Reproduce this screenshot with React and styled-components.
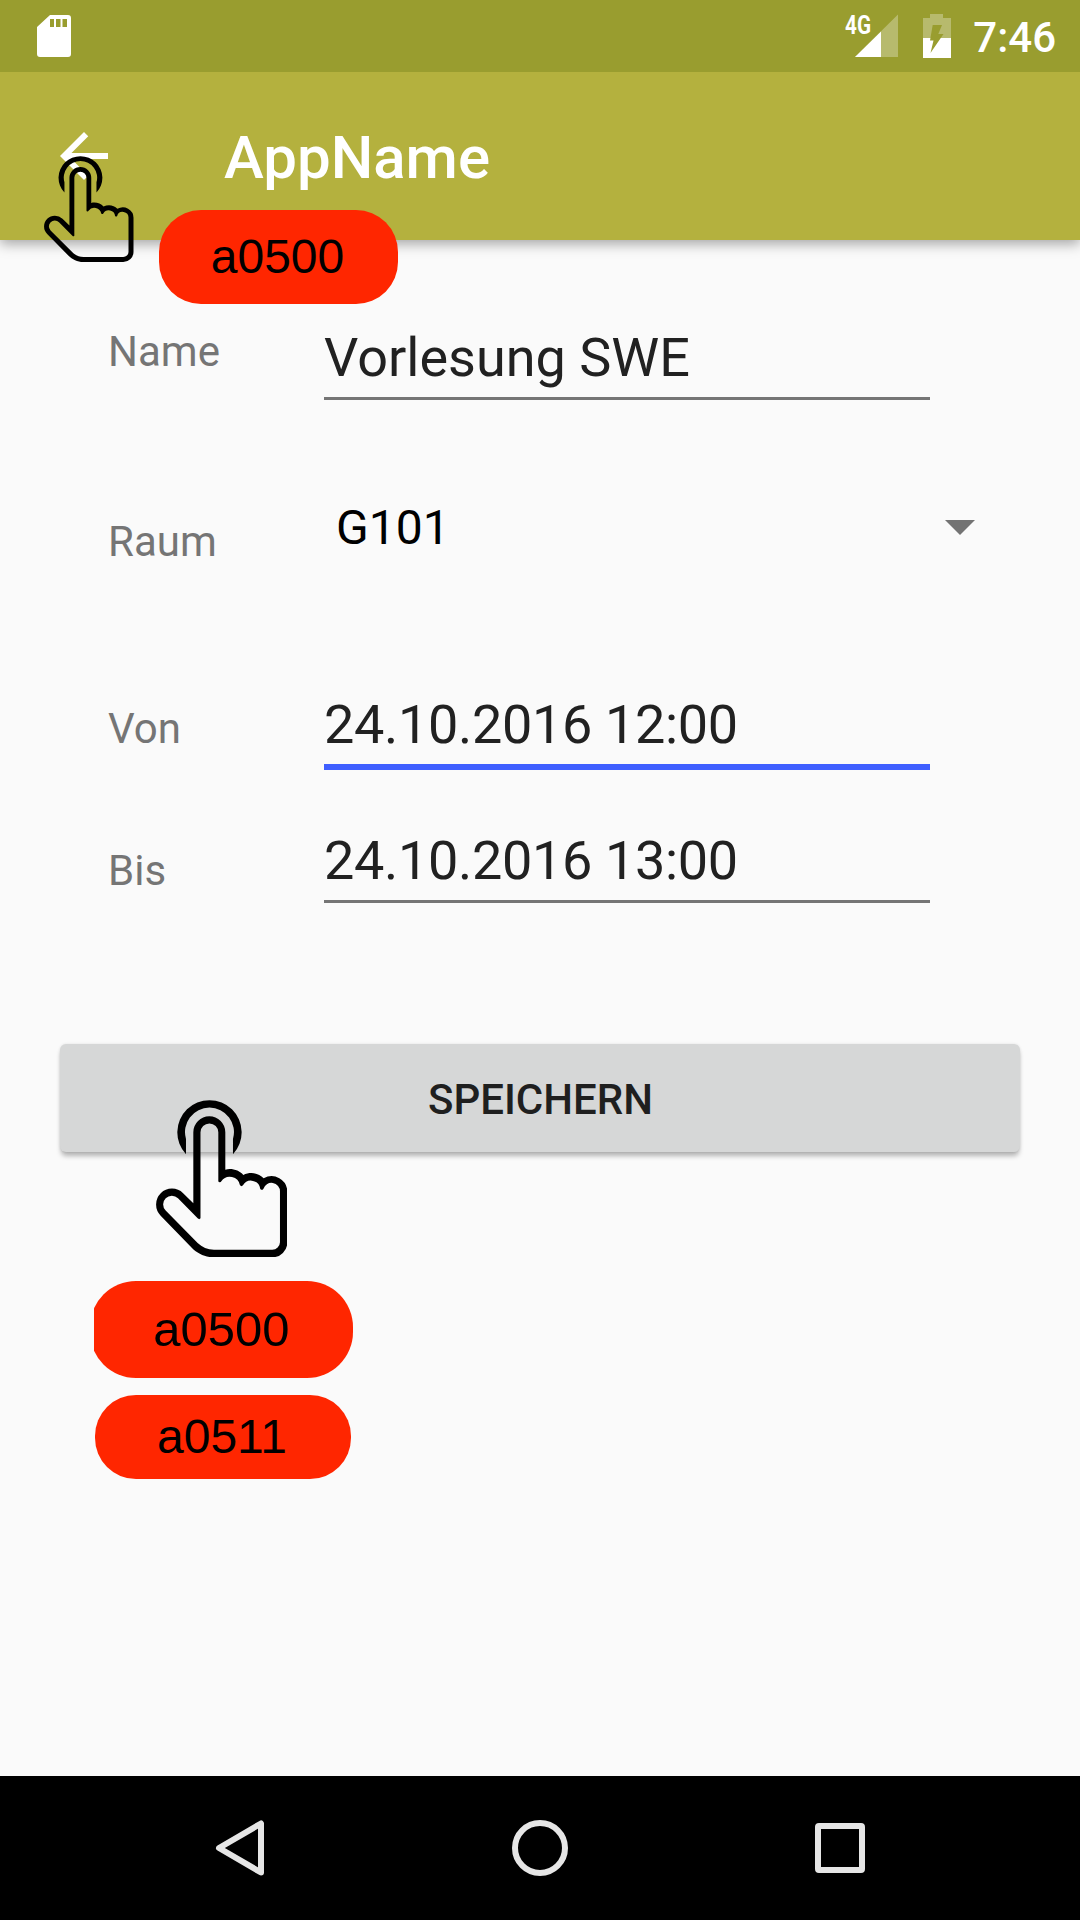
import React from "react";
import styled, { createGlobalStyle } from "styled-components";

const GlobalStyle = createGlobalStyle`
  * { box-sizing: border-box; }
  body { margin: 0; background: #fafafa; font-family: Roboto, "Liberation Sans", sans-serif; }
`;

const Screen = styled.div`
  position: relative;
  display: flex;
  flex-direction: column;
  width: 1080px;
  height: 1920px;
  overflow: hidden;
  background: #fafafa;
`;

const StatusBar = styled.header`
  position: relative;
  z-index: 1;
  display: flex;
  align-items: flex-start;
  flex: none;
  height: 72px;
  padding: 14px 25px 0 37px;
  background: #999d2f;
  color: #fff;
`;

const StatusIcons = styled.div`
  display: flex;
  margin-left: auto;
`;

const BatterySlot = styled.div`
  display: flex;
  margin: 0 22px 0 25px;
`;

const Clock = styled.span`
  margin-right: -1px;
  font-size: 42px;
  font-weight: 500;
  line-height: 48px;
`;

const AppBar = styled.div`
  position: relative;
  display: flex;
  align-items: center;
  flex: none;
  height: 168px;
  padding: 0 48px;
  background: #b4b13e;
  box-shadow: 0 4px 12px rgba(0, 0, 0, 0.34);
`;

const BackButton = styled.button`
  display: flex;
  padding: 0;
  border: 0;
  background: none;
`;

const Title = styled.h1`
  margin: 3px 0 0 104px;
  color: #fff;
  font-size: 60px;
  font-weight: 500;
  line-height: 72px;
`;

const Form = styled.main`
  display: flex;
  flex-direction: column;
  flex: 1;
  padding: 86px 60px 0;
`;

const Row = styled.div`
  display: flex;
  align-items: flex-start;
  height: ${(p) => p.$height}px;
  margin-bottom: ${(p) => p.$gap}px;
  padding-left: 48px;
`;

const Label = styled.label`
  flex: none;
  width: 216px;
  padding-top: ${(p) => p.$drop}px;
  color: #757575;
  font-size: 42px;
  line-height: 50px;
`;

const Field = styled.div`
  width: 606px;
  height: 100%;
  border-bottom: ${(p) => (p.$focused ? "6px solid #3f5fff" : "3px solid #757575")};
  color: #212121;
  font-size: 54px;
  line-height: 64px;
  letter-spacing: ${(p) => (p.$numeric ? "-0.33px" : "normal")};
  white-space: nowrap;
`;

const Select = styled.div`
  display: flex;
  align-items: center;
  justify-content: space-between;
  width: 651px;
  height: 56px;
  padding-left: 12px;
  color: #000;
  font-size: 48px;
  line-height: 56px;
`;

const Caret = styled.svg`
  margin-bottom: 1px;
`;

const SaveButton = styled.button`
  flex: none;
  height: 108px;
  padding: 2px 0 0 1px;
  border: 0;
  border-radius: 6px;
  background: #d6d7d7;
  box-shadow: 0 5px 5px -1px rgba(0, 0, 0, 0.28), 0 0 3px rgba(0, 0, 0, 0.1);
  color: #1f1f1f;
  font-family: inherit;
  font-size: 42px;
  font-weight: 500;
`;

const NavBar = styled.nav`
  display: flex;
  align-items: center;
  justify-content: space-between;
  flex: none;
  height: 144px;
  padding: 0 212px;
  background: #000;
`;

const Touch = styled.svg`
  position: absolute;
  left: ${(p) => p.$x}px;
  top: ${(p) => p.$y}px;
`;

const Tag = styled.div`
  position: absolute;
  left: ${(p) => p.$x}px;
  top: ${(p) => p.$y}px;
  width: ${(p) => p.$w}px;
  height: ${(p) => p.$h}px;
  overflow: hidden;
`;

const TagBody = styled.div`
  display: flex;
  align-items: center;
  justify-content: center;
  height: 100%;
  margin-left: ${(p) => -(p.$cut || 0)}px;
  padding-right: ${(p) => (p.$cut ? 0 : 2)}px;
  border-radius: ${(p) => p.$radius}px;
  background: #ff2600;
  color: #000;
  font-family: "Liberation Sans", Arial, sans-serif;
  font-size: ${(p) => p.$size || 48}px;
  line-height: 1;
`;

const SdCard = () => (
  <svg width="34" height="44" viewBox="0 0 34 44">
    <path
      fill="#fff"
      fillRule="evenodd"
      d="M13 1H31Q34 1 34 4V40Q34 43 31 43H3Q0 43 0 40V13ZM13 5V13H17V5ZM19 5V13H23.500V5ZM25.500 5V13H30V5Z"
    />
  </svg>
);

const Signal = () => (
  <svg width="57" height="48" viewBox="-4 0 57 48" overflow="visible">
    <path d="M53 .5V43H10Z" fill="#fff" fillOpacity=".3" />
    <path d="M36 17.500V43H10Z" fill="#fff" />
    <text
      x="0"
      y="19.500"
      fill="#fff"
      fontSize="26"
      fontWeight="700"
      textLength="26"
      lengthAdjust="spacingAndGlyphs"
    >
      4G
    </text>
  </svg>
);

const Battery = () => (
  <svg width="28" height="44" viewBox="0 0 28 44">
    <path d="M7 0H20V4H28V24H0V4H7Z" fill="#fff" fillOpacity=".3" />
    <path d="M0 24H28V44H0Z" fill="#fff" />
    <path d="M9.700 11H19L15.300 20H20.500L7.500 39L10.500 26.500H7Z" fill="#999d2f" />
  </svg>
);

const TouchHand = ({ x, y, width, height }) => (
  <Touch $x={x} $y={y} width={width} height={height} viewBox="0 0 394 472" preserveAspectRatio="none">
    <path d="M90 163A96.500 96.500 0 1 1 231 163V117A73.500 73.500 0 1 0 90 117Z" />
    <path
      fillRule="evenodd"
      d="M112 97A48 48 0 0 1 208 97V209C228 204 250 211 262 225C284 214 308 219 323 235A47 47 0 0 1 394 275V427A45 45 0 0 1 349 472H172C148 472 124 460 108 444L14 347A47.660 47.660 0 0 1 81.400 279.600L112 310Z
         M133.500 97A26.700 26.700 0 0 1 187 97V243Q187 247 191.500 247Q195 247 196 244A31 31 0 0 1 252 256Q257 261 261 256A28 28 0 0 1 313 267Q318 272 322 267A25.500 25.500 0 0 1 372 275V427A23 23 0 0 1 349 449.500H174C155 449 138 442 125 429L29 331.600A26 26 0 0 1 66 295L125 355Q130 360 133.500 355Z"
    />
  </Touch>
);

export default function App() {
  return (
    <Screen>
      <GlobalStyle />
      <StatusBar>
        <SdCard />
        <StatusIcons>
          <Signal />
          <BatterySlot>
            <Battery />
          </BatterySlot>
          <Clock>7:46</Clock>
        </StatusIcons>
      </StatusBar>
      <AppBar>
        <BackButton aria-label="Zurück">
          <svg width="72" height="72" viewBox="0 0 24 24">
            <path fill="#fff" d="M20 11H7.830l5.590-5.590L12 4l-8 8 8 8 1.410-1.410L7.830 13H20v-2z" />
          </svg>
        </BackButton>
        <Title>AppName</Title>
      </AppBar>
      <Form>
        <Row $height={74} $gap={100}>
          <Label $drop={1}>Name</Label>
          <Field>Vorlesung SWE</Field>
        </Row>
        <Row $height={70} $gap={123}>
          <Label $drop={17}>Raum</Label>
          <Select>
            G101
            <Caret width="30" height="15" viewBox="0 0 30 15">
              <path d="M0 0H30L15 15Z" fill="#737373" />
            </Caret>
          </Select>
        </Row>
        <Row $height={77} $gap={59}>
          <Label $drop={11}>Von</Label>
          <Field $focused $numeric>24.10.2016 12:00</Field>
        </Row>
        <Row $height={74} $gap={141}>
          <Label $drop={17}>Bis</Label>
          <Field $numeric>24.10.2016 13:00</Field>
        </Row>
        <SaveButton>SPEICHERN</SaveButton>
      </Form>
      <NavBar>
        <svg width="56" height="56" viewBox="0 0 56 56" fill="none" stroke="#e6e6e6" strokeWidth="6" strokeLinejoin="round">
          <path d="M49 3.500V52.500L7 28Z" />
        </svg>
        <svg width="56" height="56" viewBox="0 0 56 56" fill="none" stroke="#e6e6e6" strokeWidth="6">
          <circle cx="28" cy="28" r="25" />
        </svg>
        <svg width="56" height="56" viewBox="0 0 56 56" fill="none" stroke="#e6e6e6" strokeWidth="6">
          <rect x="6" y="6" width="44" height="44" rx="1" />
        </svg>
      </NavBar>

      <TouchHand x={44.3} y={156} width={89.5} height={106} />
      <TouchHand x={155.7} y={1099.7} width={131.3} height={157.3} />
      <Tag $x={159} $y={210} $w={239} $h={94}>
        <TagBody $radius={42}>a0500</TagBody>
      </Tag>
      <Tag $x={94} $y={1281} $w={259} $h={97}>
        <TagBody $radius={46} $cut={4} $size={49}>a0500</TagBody>
      </Tag>
      <Tag $x={95} $y={1395} $w={256} $h={84}>
        <TagBody $radius={41}>a0511</TagBody>
      </Tag>
    </Screen>
  );
}
